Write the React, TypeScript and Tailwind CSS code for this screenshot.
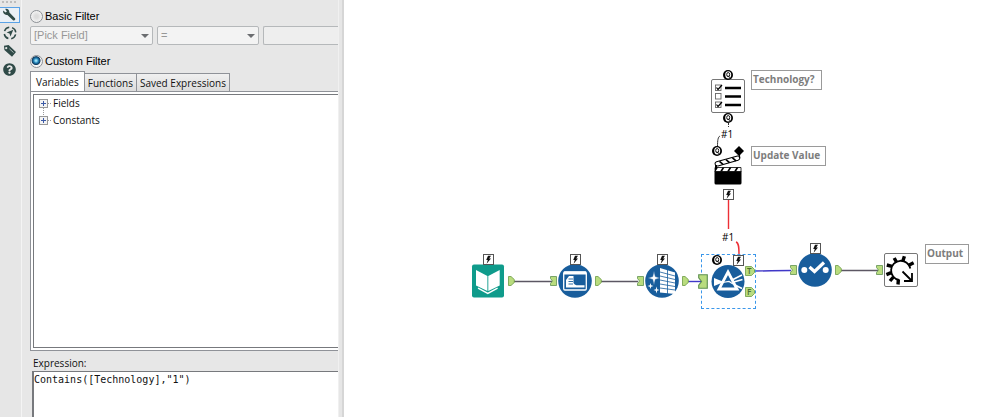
import { useState } from 'react';
import type { ReactNode } from 'react';
import { FaQuestionCircle } from 'react-icons/fa';

const UI_FONT = "font-['Open_Sans','Noto_Sans',sans-serif]";

type Tab = 'Variables' | 'Functions' | 'Saved Expressions';

const TABS: Tab[] = ['Variables', 'Functions', 'Saved Expressions'];

const TREE: Record<Tab, string[]> = {
  Variables: ['Fields', 'Constants'],
  Functions: ['Conditional', 'Conversion', 'String'],
  'Saved Expressions': [],
};

function WrenchIcon() {
  return (
    <svg viewBox="0 0 14 14" className="size-[14px]">
      <path
        d="M1.2 2.6 L3.6 4.6 L4.9 3.4 L3.2 1 C5.4 0.4 7.6 2 7.4 4.6 L13 10.2 C14 11.4 12.4 13.2 11 12.2 L5.4 6.9 C2.8 7.4 0.6 5.2 1.2 2.6 Z"
        fill="#2f4a47"
      />
    </svg>
  );
}

function TargetIcon() {
  return (
    <svg viewBox="0 0 14 14" className="size-[14px]" fill="none" stroke="#2f4a47">
      <circle cx="7" cy="7" r="5.8" strokeWidth="1.5" strokeDasharray="6.1 3" strokeDashoffset="-1.5" />
      <path d="M10.3 3.7 L3.6 6.5 L6.5 7.5 L7.5 10.4 Z" fill="#2f4a47" stroke="none" />
    </svg>
  );
}

function TagIcon() {
  return (
    <svg viewBox="0 0 14 14" className="size-[14px]">
      <path
        d="M1 1.8 L5.6 1 L13 8 L9 12.8 L1.4 6 Z M3.2 3 A1.1 1.1 0 1 0 3.3 5.2 A1.1 1.1 0 0 0 3.2 3 Z"
        fill="#2f4a47"
        fillRule="evenodd"
      />
      <path d="M6.4 4.8 L10.6 8.6" stroke="#dfe5e4" strokeWidth="0.7" />
    </svg>
  );
}

const TOOLS: { label: string; icon: ReactNode }[] = [
  { label: 'Configuration', icon: <WrenchIcon /> },
  { label: 'Navigation', icon: <TargetIcon /> },
  { label: 'Annotation', icon: <TagIcon /> },
  { label: 'Help', icon: <FaQuestionCircle className="size-[13px]" /> },
];

function Toolbar() {
  const [active, setActive] = useState('Configuration');

  return (
    <nav className="flex w-[22px] shrink-0 flex-col gap-[2px] border-r border-[#f4f4f4] bg-[#e6e6e6] text-[#2f4a47]">
      <div className="mt-px mb-[2px] ml-[2px] w-[14px] border-t-2 border-dotted border-[#bdbdbd]" />
      {TOOLS.map((tool) => (
        <button
          key={tool.label}
          type="button"
          aria-label={tool.label}
          onClick={() => setActive(tool.label)}
          className={`flex h-4 w-5 items-center justify-center border pr-px ${
            active === tool.label ? 'border-l-0 border-[#5aa2e6] bg-[#eaf0f6]' : 'border-transparent'
          }`}
        >
          {tool.icon}
        </button>
      ))}
    </nav>
  );
}

function FilterRadio({ label, checked, onSelect }: { label: string; checked: boolean; onSelect: () => void }) {
  return (
    <label className="flex h-[18px] items-center gap-[2px] font-['Liberation_Sans',sans-serif] text-[11px] text-black">
      <input
        type="radio"
        name="filter"
        checked={checked}
        onChange={onSelect}
        className="size-[13px] appearance-none rounded-full border border-[#8c9095] bg-[#ededed] bg-[radial-gradient(circle,#dcdcdc_20%,#f7f7f7_80%)] checked:bg-[radial-gradient(circle_at_46%_42%,#9be0f7_0_8%,#1f7fb4_28%,#123a5e_46%,#f4f4f4_56%)]"
      />
      {label}
    </label>
  );
}

function Dropdown({ label, value, className }: { label: string; value: string; className: string }) {
  return (
    <div className={`grid shrink-0 items-center ${className}`}>
      <select
        disabled
        aria-label={label}
        className="col-start-1 row-start-1 h-[19px] w-full appearance-none rounded-xs border border-[#b5b8ba] bg-[#f3f3f3] pl-[3px] font-['Liberation_Sans',sans-serif] text-[11px] text-[#979797] opacity-100"
      >
        <option>{value}</option>
      </select>
      <svg viewBox="0 0 8 4" className="pointer-events-none col-start-1 row-start-1 mr-1 h-1 w-2 justify-self-end">
        <path d="M0 0 H8 L4 4 Z" fill="#6b6d70" />
      </svg>
    </div>
  );
}

function TreeItem({ name, last }: { name: string; last: boolean }) {
  return (
    <li className="flex h-[17px] items-center">
      <svg viewBox="0 0 14 17" className="h-[17px] w-[14px] shrink-0" fill="none">
        {!last && <path d="M4.5 13 V17" stroke="#9a9a9a" strokeDasharray="1 1" />}
        {last && <path d="M4.5 0 V4" stroke="#9a9a9a" strokeDasharray="1 1" />}
        <path d="M9 8.5 H13" stroke="#9a9a9a" strokeDasharray="1 1" />
        <rect x="0.5" y="4.5" width="8" height="8" fill="#f3f3f3" stroke="#989898" />
        <path d="M2 8.5 H7 M4.5 6 V11" stroke="#3c5aa6" />
      </svg>
      {name}
    </li>
  );
}

function ConfigPanel() {
  const [mode, setMode] = useState('custom');
  const [tab, setTab] = useState<Tab>('Variables');
  const [expression, setExpression] = useState('Contains([Technology],"1")');

  return (
    <section className={`flex w-[316px] shrink-0 flex-col bg-[#e7e7e7] pt-[7px] pl-2 text-[10px] text-[#111] ${UI_FONT}`}>
      <FilterRadio label="Basic Filter" checked={mode === 'basic'} onSelect={() => setMode('basic')} />
      <div className="mt-px mb-[7px] flex gap-1 overflow-hidden">
        <Dropdown label="Field" value="[Pick Field]" className="w-[123px]" />
        <Dropdown label="Operator" value="=" className="w-[102px]" />
        <input
          disabled
          aria-label="Value"
          className="h-[19px] min-w-0 flex-1 rounded-l-xs border border-r-0 border-[#b5b8ba] bg-[#eeeeee]"
        />
      </div>
      <FilterRadio label="Custom Filter" checked={mode === 'custom'} onSelect={() => setMode('custom')} />

      <div role="tablist" className="mt-px flex items-end">
        {TABS.map((name) => (
          <button
            key={name}
            type="button"
            role="tab"
            aria-selected={tab === name}
            onClick={() => setTab(name)}
            className={`border border-b-0 border-[#8f9298] leading-4 whitespace-nowrap ${
              tab === name
                ? 'h-[20px] bg-white px-[5px]'
                : 'h-[18px] border-l-0 bg-linear-to-b from-[#f0f0f0] to-[#dcdcdc] px-[3px]'
            }`}
          >
            {name}
          </button>
        ))}
      </div>
      <div className="border-y border-l border-[#8f9298] bg-white py-[2px] pl-[2px]">
        <ul className="h-[254px] border border-r-0 border-[#77797d] bg-white pl-[5px]">
          {TREE[tab].map((name, i) => (
            <TreeItem key={name} name={name} last={i === TREE[tab].length - 1} />
          ))}
        </ul>
      </div>

      <label htmlFor="expression" className="mt-1 ml-[3px] h-4 leading-4">
        Expression:
      </label>
      <textarea
        id="expression"
        value={expression}
        spellCheck={false}
        onChange={(e) => setExpression(e.target.value)}
        className="ml-[2px] min-h-[46px] flex-1 resize-none border-t border-l-2 border-[#77797d] bg-white font-['DejaVu_Sans_Mono','Liberation_Mono',monospace] text-[10px] leading-4 text-[#111] outline-none"
      />
    </section>
  );
}

function Bolt() {
  return (
    <svg viewBox="0 0 11 11" className="size-[11px] shrink-0">
      <rect x="0.5" y="0.5" width="10" height="10" fill="#fff" stroke="#555" />
      <path d="M5 1.8 H8 L6.2 4.6 H8 L3.6 9.8 L4.8 6 H3.2 Z" fill="#111" />
    </svg>
  );
}

function QAnchor() {
  return (
    <svg viewBox="0 0 10 10" className="size-[10px] shrink-0">
      <circle cx="5" cy="5" r="5" fill="#000" />
      <ellipse cx="5.2" cy="4.8" rx="3" ry="3.6" fill="#fff" />
      <ellipse cx="5.2" cy="4.6" rx="1.5" ry="2.1" fill="none" stroke="#000" strokeWidth="0.9" />
      <path d="M5 5.6 L7 7.8" stroke="#000" strokeWidth="1" />
    </svg>
  );
}

function InAnchor({ className = 'h-[10px] w-[7px]' }: { className?: string }) {
  return (
    <svg viewBox="0 0 7 10" preserveAspectRatio="none" className={`shrink-0 ${className}`}>
      <path d="M0.5 0.5 H6.5 V9.5 H0.5 V7.5 L2.5 5 L0.5 2.5 Z" fill="#b9dc7e" stroke="#5f9150" strokeWidth="0.8" />
    </svg>
  );
}

function OutAnchor() {
  return (
    <svg viewBox="0 0 7 10" className="h-[10px] w-[7px] shrink-0">
      <path d="M0.5 0.5 H3 L6.3 3.5 V6.5 L3 9.5 H0.5 Z" fill="#b9dc7e" stroke="#6c9a45" strokeWidth="0.8" />
    </svg>
  );
}

function LetterAnchor({ letter }: { letter: string }) {
  return (
    <svg viewBox="0 0 10 10" className="size-[10px] shrink-0">
      <path d="M0.5 0.5 H6.5 L9.5 3.5 V6.5 L6.5 9.5 H0.5 Z" fill="#b9dc7e" stroke="#6c9a45" strokeWidth="0.8" />
      <text x="2" y="8" fontSize="8" fontWeight="600" fontFamily="Open Sans, sans-serif" fill="#4c6b33">
        {letter}
      </text>
    </svg>
  );
}

function Tool({ label, children }: { label: string; children: ReactNode }) {
  return (
    <svg viewBox="0 0 34 34" role="img" aria-label={label} className="size-[34px] shrink-0">
      {children}
    </svg>
  );
}

// One workflow tool: bolt on top, connectors left and right of the icon
function Node({ className, input, bolt, output, children }: {
  className: string;
  input?: boolean;
  bolt?: boolean;
  output?: boolean;
  children: ReactNode;
}) {
  return (
    <div className={`absolute flex items-end ${className}`}>
      {input && <div className="mr-px flex h-[34px] items-center"><InAnchor /></div>}
      <div className="flex flex-col items-center">
        {bolt && <div className="z-10 -mb-px"><Bolt /></div>}
        {children}
      </div>
      {output && <div className="ml-[3px] flex h-[34px] items-center"><OutAnchor /></div>}
    </div>
  );
}

function Caption({ className, children }: { className: string; children: string }) {
  return (
    <div
      className={`h-5 border border-[#9a9a9a] bg-white px-px text-[10px] leading-[17px] font-bold whitespace-nowrap text-[#7d7d7d] ${UI_FONT} ${className}`}
    >
      {children}
    </div>
  );
}

function WireLabel({ className }: { className: string }) {
  return <span className={`absolute text-[10px] leading-[14px] text-black ${UI_FONT} ${className}`}>#1</span>;
}

function Wires() {
  return (
    <svg className="absolute top-0 left-0 size-full" fill="none" strokeWidth="1.4">
      <g stroke="#5c5763">
        <path d="M170 281.5 H208" />
        <path d="M257 281.5 H294" />
        <path d="M496 270.5 H534" />
      </g>
      <g stroke="#4038c8">
        <path d="M344 281.5 H357" />
        <path d="M410 271 C425 271 430 270.5 447 270.5" />
      </g>
      <g stroke="#333" strokeWidth="1">
        <path d="M384.5 123 V127" strokeDasharray="2 1" />
        <path d="M376 136 C374 137 373.5 140 373.5 147" />
      </g>
      <g stroke="#ed2f36">
        <path d="M384.5 200 V229" />
        <path d="M392 242 C395 243 395 248 395 254" />
      </g>
    </svg>
  );
}

function Canvas() {
  return (
    <main className="relative min-w-0 flex-1 overflow-hidden bg-white">
      <Wires />

      {/* Interface tools */}
      <div className="absolute top-[70px] left-[367px] flex items-start gap-[6px]">
        <div className="flex flex-col items-center">
          <div className="z-10 -mb-px"><QAnchor /></div>
          <Tool label="List box">
            <rect x="0.5" y="0.5" width="33" height="33" rx="1.5" fill="#fff" stroke="#777" />
            <g fill="#fff" stroke="#666" strokeWidth="0.9">
              <rect x="4.5" y="6" width="5.5" height="5.5" />
              <rect x="4.5" y="14.5" width="5.5" height="5.5" />
              <rect x="4.5" y="23" width="5.5" height="5.5" />
            </g>
            <path d="M5.5 8.5 L7 10.5 L11 6 M5.5 25.5 L7 27.5 L11 23" fill="none" stroke="#000" strokeWidth="1.2" />
            <path d="M14 9 H30 M14 17.5 H30 M14 26 H30" stroke="#000" strokeWidth="2.6" />
          </Tool>
          <QAnchor />
        </div>
        <Caption className="w-[71px]">Technology?</Caption>
      </div>
      <WireLabel className="top-[127px] left-[377px]" />

      <div className="absolute top-[146px] left-[367px] flex items-start gap-[6px]">
        <div className="flex flex-col items-center">
          <div className="-mb-1 flex w-full justify-between px-px">
            <QAnchor />
            <svg viewBox="0 0 10 10" className="size-[10px]">
              <path d="M5 0 L10 5 L5 10 L0 5 Z" fill="#000" />
            </svg>
          </div>
          <Tool label="Action">
            <path d="M3.5 19 H30.5 V31 Q30.5 32.5 29 32.5 H5 Q3.5 32.5 3.5 31 Z" fill="#000" />
            <path d="M4 15.5 H30 V19.5 H4 Z" fill="#fff" stroke="#000" strokeWidth="0.8" />
            <path d="M4 15.5 H7 L4.5 19.5 H4 Z M11.5 15.5 H13.5 L11 19.5 H9 Z M18.5 15.5 H20.5 L18 19.5 H16 Z M25.5 15.5 H27.5 L25 19.5 H23 Z" fill="#000" />
            <path d="M4 12 Q4 10.2 5.5 9.8 L26.5 4 Q29 3.8 28.8 6.2 Q28.6 7.8 27 8.3 L7 14 Q4.5 14.2 4 12 Z" fill="#fff" stroke="#000" strokeWidth="1.1" />
            <path d="M8.5 9.4 L12 12.4 M15 7.6 L18.5 10.6 M21.5 5.8 L25 8.8" stroke="#000" strokeWidth="1.6" />
            <path d="M5 13 V16" stroke="#000" strokeWidth="2" />
            <path d="M28.5 2 V6" stroke="#000" strokeWidth="1.2" />
          </Tool>
          <div className="mt-[3px]"><Bolt /></div>
        </div>
        <Caption className="w-[75px]">Update Value</Caption>
      </div>
      <WireLabel className="top-[230px] left-[378px]" />

      {/* Workflow, left to right */}
      <Node className="top-[254px] left-[127px]" bolt output>
        <Tool label="Input data">
          <rect x="1" y="0.5" width="32" height="33" rx="2" fill="#0f9b8b" />
          <path d="M5 6 L16.4 12 V27 L5 21.5 Z M28.7 6 L17.3 12 V27 L28.7 21.5 Z" fill="#fff" />
          <path d="M7 24.2 L16.8 29.4 L26.6 24.2" fill="none" stroke="#fff" strokeWidth="1.4" />
        </Tool>
      </Node>

      <Node className="top-[254px] left-[206px]" input bolt output>
        <Tool label="Data cleansing">
          <circle cx="17" cy="17" r="16.8" fill="#185d9c" />
          <rect x="5.7" y="8" width="22.6" height="18" rx="1.2" fill="none" stroke="#fff" strokeWidth="1.3" />
          <path d="M6 9 H28" stroke="#fff" strokeWidth="3" />
          <path d="M8 23.5 V16 L11 12 H15.5 V19 Q16.5 21 18.5 21.2 H26.5 V23.5 Z" fill="#fff" />
          <path d="M10.5 15 H15 M10.5 17.5 H15 M10.5 20 H15" stroke="#185d9c" strokeWidth="0.9" />
        </Tool>
      </Node>

      <Node className="top-[254px] left-[293px]" input bolt output>
        <Tool label="Imputation">
          <circle cx="17" cy="17" r="16.8" fill="#185d9c" />
          <path d="M15 4 L30 8.5 V30 L15 28.5 Z" fill="#fff" />
          <path d="M15 8 L30 12 M15 12 L30 15.5 M15 16 L30 19 M15 20 L30 22.5 M15 24 L30 26 M22.5 5 V30" stroke="#185d9c" strokeWidth="0.8" />
          <path d="M9 7 L10.3 12.6 L15 14 L10.3 15.4 L9 21 L7.7 15.4 L3 14 L7.7 12.6 Z" fill="#fff" stroke="#185d9c" strokeWidth="0.5" />
          <path d="M5.5 19 L6.2 21.3 L8.5 22 L6.2 22.7 L5.5 25 L4.8 22.7 L2.5 22 L4.8 21.3 Z M11.5 22.5 L12.2 25.2 L14.5 26 L12.2 26.8 L11.5 29.5 L10.8 26.8 L8.5 26 L10.8 25.2 Z" fill="#fff" />
        </Tool>
      </Node>

      {/* Selected filter tool */}
      <div className="absolute top-[254px] left-[357px] flex size-[55px] items-start border border-dashed border-[#3b97ea]">
        <InAnchor className="mt-[19px] mr-[3px] -ml-1 h-[15px] w-[10px]" />
        <div className="flex flex-col">
          <div className="-mb-px flex justify-between px-px">
            <QAnchor />
            <Bolt />
          </div>
          <Tool label="Filter">
            <circle cx="17" cy="16.5" r="16.5" fill="#185d9c" />
            <path d="M3 13 L13 17 L3 21 Z" fill="#fff" />
            <path d="M20 15.5 L31 10 M21 17.5 L31.5 14.5 M20 18 L31 23.5" stroke="#fff" strokeWidth="1.6" />
            <path d="M17 7 L26 24 H8 Z" fill="#185d9c" stroke="#fff" strokeWidth="2.8" />
            <path d="M11.5 17.5 L18 16.5 L22 19" fill="none" stroke="#fff" strokeWidth="1.2" />
          </Tool>
        </div>
        <div className="flex flex-col gap-[11px] pt-[11px]">
          <LetterAnchor letter="T" />
          <LetterAnchor letter="F" />
        </div>
      </div>

      <Node className="top-[243px] left-[446px]" input bolt output>
        <Tool label="Select">
          <circle cx="17" cy="17" r="16.8" fill="#185d9c" />
          <circle cx="6.3" cy="17" r="3" fill="#fff" />
          <circle cx="27.7" cy="17" r="3" fill="#fff" />
          <path d="M11.5 14 L16.5 18.5 L26 9.5" fill="none" stroke="#fff" strokeWidth="3.2" />
        </Tool>
      </Node>

      <Node className="top-[253px] left-[532px]" input>
        <Tool label="Macro output">
          <rect x="0.5" y="0.5" width="33" height="33" rx="1.5" fill="#fff" stroke="#777" />
          <path d="M15 27 A9.7 9.7 0 1 1 26.3 15.5" fill="none" stroke="#000" strokeWidth="1.8" />
          <path
            d="M12.7 9.5 L10.2 5 M18.8 8.2 L20.4 3.2 M24.3 12.5 L29.6 9.8 M8 13.4 L2.8 12 M7.2 19.6 L2.4 21.6 M9.4 24 L6 28 M14.4 26.4 L14 31.5"
            stroke="#000"
            strokeWidth="3.4"
          />
          <path d="M18.5 18.5 L27.5 27.5 M20 28 H28 V20" fill="none" stroke="#000" strokeWidth="1.8" />
        </Tool>
      </Node>
      <div className="absolute top-[244px] left-[581px]">
        <Caption className="w-[44px]">Output</Caption>
      </div>
    </main>
  );
}

export default function App() {
  return (
    <div className="flex min-h-screen w-full bg-white">
      <Toolbar />
      <ConfigPanel />
      <div className="w-[6px] shrink-0 border-r-2 border-l border-l-[#f0f0f0] border-r-[#d6d6d6] bg-[#e6e6e6]" />
      <Canvas />
    </div>
  );
}
